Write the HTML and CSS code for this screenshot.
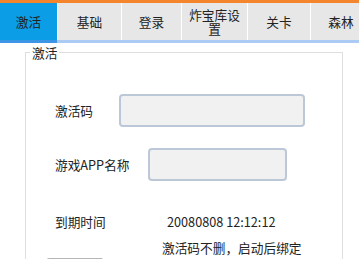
FILE: index.html
```html
<!DOCTYPE html>
<html lang="zh">
<head>
<meta charset="utf-8">
<link rel="stylesheet" href="styles.css">
</head>
<body>
<div class="topbar"></div>
<nav class="tabs">
  <div class="tab tab-active w1">激活</div>
  <div class="tab w2">基础</div>
  <div class="tab w3">登录</div>
  <div class="tab w4">炸宝库设置</div>
  <div class="tab w5">关卡</div>
  <div class="tab w6">森林</div>
</nav>
<div class="tabline"><div class="tabline-active"></div></div>
<fieldset class="group">
  <legend class="group-title">激活</legend>
  <div class="row row1">
    <span class="label label1">激活码</span>
    <div class="input input1"></div>
  </div>
  <div class="row row2">
    <span class="label label2">游戏APP名称</span>
    <div class="input input2"></div>
  </div>
  <div class="row row3">
    <span class="label label3">到期时间</span>
    <span class="value">20080808 12:12:12</span>
  </div>
  <div class="row row4">
    <span class="note">激活码不删，启动后绑定</span>
  </div>
  <div class="row row5">
    <div class="button"></div>
  </div>
</fieldset>
</body>
</html>
```
FILE: styles.css
```css
html, body {
  margin: 0;
  padding: 0;
  background: #ffffff;
  overflow: hidden;
}
body {
  width: 359px;
  height: 259px;
  font-family: "Noto Sans CJK SC", "Noto Sans", sans-serif;
  font-size: 12.7px;
  color: #222222;
}
.topbar {
  height: 3px;
  background: #f5852d;
}
.tabs {
  display: flex;
  height: 37px;
  background: #ffffff;
  gap: 1px;
  overflow: hidden;
}
.tab {
  flex: none;
  display: flex;
  align-items: center;
  justify-content: center;
  text-align: center;
  background: #e7e7e7;
  line-height: 14px;
  padding: 0 6px;
  box-sizing: border-box;
}
.tab-active {
  background: #0b9de6;
}
.w1 { width: 57px; }
.w2 { width: 63px; }
.w3 { width: 59px; }
.w4 { width: 65px; }
.w5 { width: 62px; }
.w6 { width: 60px; }
.tabline {
  height: 3px;
  background: #abcbf4;
}
.tabline-active {
  width: 57px;
  height: 3px;
  background: #3d95e6;
}
.group {
  margin: 2px 0 0 25px;
  width: 318px;
  box-sizing: border-box;
  padding: 0;
  border: 1px solid #dedede;
  min-width: 0;
}
.group-title {
  margin-left: 4px;
  padding: 0 2px;
  line-height: 15px;
}
.row {
  display: flex;
  align-items: center;
  padding-left: 29px;
}
.label {
  flex: none;
  line-height: 16px;
}
.label1 { width: 64px; }
.label2 { width: 93px; }
.label3 { width: 112px; }
.row1 { margin-top: 34px; }
.row2 { margin-top: 21px; }
.row3 { margin-top: 33px; }
.row4 { margin-top: 10px; padding-left: 136px; }
.row5 { margin-top: 2px; padding-left: 20px; }
.input {
  height: 33px;
  box-sizing: border-box;
  border: 2px solid #bcc7d8;
  border-radius: 4px;
  background: #f1f1f1;
}
.input1 { width: 186px; }
.input2 { width: 139px; }
.value {
  line-height: 16px;
}
.note {
  line-height: 16px;
}
.button {
  width: 56px;
  height: 30px;
  border: 1px solid #b5b5b5;
  border-radius: 3px;
  background: #efefef;
}
```
